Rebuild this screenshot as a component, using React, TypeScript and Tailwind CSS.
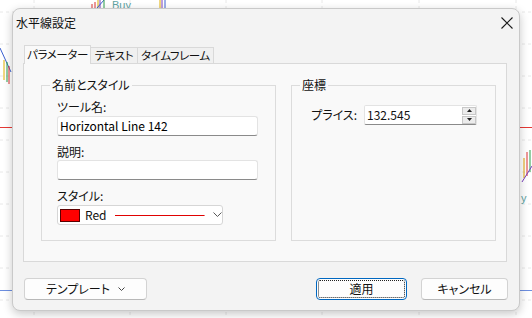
import React from 'react';

function ChartBackground() {
  const hLines = [12, 44, 76, 108, 140, 172, 204, 236, 268, 300];
  const vLines = [34, 130, 226, 322, 419, 516];
  return (
    <svg className="absolute inset-0" width="532" height="318" viewBox="0 0 532 318">
      <rect width="532" height="318" fill="#ffffff" />
      {hLines.map((y) => (
        <line key={'h' + y} x1="0" y1={y} x2="532" y2={y} stroke="#e8e8e8" strokeDasharray="3 3" />
      ))}
      {vLines.map((x) => (
        <line key={'v' + x} x1={x} y1="0" x2={x} y2="318" stroke="#e8e8e8" strokeDasharray="3 3" />
      ))}
      <line x1="0" y1="127.5" x2="532" y2="127.5" stroke="#e53935" />
      <line x1="0" y1="290.5" x2="532" y2="290.5" stroke="#6d8fe0" />
      {/* candles top */}
      <line x1="92" y1="4" x2="92" y2="8" stroke="#d33" />
      <line x1="95" y1="2" x2="95" y2="8" stroke="#d33" />
      <line x1="98" y1="0" x2="98" y2="8" stroke="#e0b000" />
      <line x1="100" y1="0" x2="100" y2="8" stroke="#7a3fbf" />
      <line x1="97" y1="8" x2="104" y2="0" stroke="#3a5fd0" />
      <line x1="104" y1="0" x2="104" y2="8" stroke="#2a9d4a" />
      <text x="112" y="9" fontSize="11" fill="#5fa3a3" fontFamily="Liberation Sans, sans-serif">Buy</text>
      <line x1="160" y1="0" x2="160" y2="8" stroke="#e0b000" />
      <line x1="162" y1="0" x2="162" y2="9" stroke="#7a3fbf" />
      <line x1="165" y1="0" x2="165" y2="8" stroke="#3a5fd0" />
      {/* left candles */}
      <line x1="0" y1="48" x2="11" y2="72" stroke="#3a5fd0" />
      <line x1="4" y1="60" x2="4" y2="80" stroke="#e0b000" />
      <line x1="7" y1="62" x2="7" y2="82" stroke="#2a9d4a" />
      <line x1="9" y1="66" x2="9" y2="84" stroke="#d33" />
      {/* right candles */}
      <line x1="524" y1="158" x2="524" y2="178" stroke="#e0a000" />
      <line x1="527" y1="152" x2="527" y2="176" stroke="#d33" />
      <line x1="530" y1="150" x2="530" y2="172" stroke="#2a9d4a" />
      <line x1="522" y1="182" x2="532" y2="166" stroke="#7a3fbf" />
      <text x="521" y="202" fontSize="11" fill="#5fa3a3" fontFamily="Liberation Sans, sans-serif">y</text>
    </svg>
  );
}

function TextInput({ value, width }: { value?: string; width: string }) {
  return (
    <div
      className={`${width} h-[20px] bg-white border border-[#e3e3e3] border-b-[#8a8a8a] rounded-[3px] flex items-center pl-[2px] text-[12px] leading-none text-black`}
    >
      {value}
    </div>
  );
}

export default function App() {
  return (
    <div className="relative w-[532px] h-[318px] overflow-hidden font-['Noto_Sans_CJK_JP',sans-serif] [font-feature-settings:'palt'] text-[#111]">
      <ChartBackground />

      <div className="absolute left-[12px] top-[8px] w-[508px] h-[303px] bg-[#f3f3f3] border border-[#c9c9c9] rounded-[8px] shadow-[0_3px_10px_rgba(0,0,0,0.22)] flex flex-col">
        {/* title bar */}
        <div className="h-[36px] flex items-start justify-between">
          <div className="pl-[3px] pt-[5px] text-[12px] leading-[17px]">水平線設定</div>
          <div className="mr-[6px] mt-[7px] w-[13px] h-[13px] flex items-center justify-center">
            <svg width="12" height="12" viewBox="0 0 12 12">
              <path d="M0.5 0.5 L11.5 11.5 M11.5 0.5 L0.5 11.5" stroke="#1a1a1a" strokeWidth="1.1" fill="none" />
            </svg>
          </div>
        </div>

        {/* tabs */}
        <div className="ml-[10px] mr-[12px]">
          <div className="relative z-10 flex items-end pl-[1px] text-[11.5px] tracking-[-0.4px] whitespace-nowrap">
            <div className="w-[67px] h-[19px] -mb-px bg-[#f9f9f9] border border-b-0 border-[#d9d9d9] flex items-center justify-center leading-none">
              パラメーター
            </div>
            <div className="w-[47px] h-[16px] bg-[#f0f0f0] border border-l-0 border-b-0 border-[#d9d9d9] flex items-center justify-center leading-none">
              テキスト
            </div>
            <div className="w-[76px] h-[16px] bg-[#f0f0f0] border border-l-0 border-b-0 border-[#d9d9d9] flex items-center justify-center leading-none">
              タイムフレーム
            </div>
          </div>

          <div className="h-[199px] bg-[#f9f9f9] border border-[#d9d9d9] flex pl-[17px] pt-[13px] gap-[15px]">
            {/* 名前とスタイル */}
            <fieldset className="w-[235px] h-[164px] border border-[#dcdcdc] px-[8px]">
              <legend className="px-[2px] text-[12px] leading-[16px]">名前とスタイル</legend>
              <div className="pl-[7px] pt-[6px] flex flex-col text-[12px]">
                <div className="leading-[15px]">ツール名:</div>
                <div className="mt-[2px]">
                  <TextInput value="Horizontal Line 142" width="w-[201px]" />
                </div>
                <div className="mt-[8px] leading-[15px]">説明:</div>
                <div className="mt-[1px]">
                  <TextInput width="w-[201px]" />
                </div>
                <div className="mt-[8px] leading-[15px]">スタイル:</div>
                <div className="mt-[2px] w-[166px] h-[20px] bg-white border border-[#d6d6d6] rounded-[3px] flex items-center pl-[2px]">
                  <div className="w-[20px] h-[13px] bg-[#ff0000] border border-[#5a0000]" />
                  <span className="ml-[5px] text-[12px] leading-none">Red</span>
                  <svg className="ml-[9px]" width="90" height="3" viewBox="0 0 90 3">
                    <line x1="0" y1="1.5" x2="90" y2="1.5" stroke="#e00000" strokeWidth="1" />
                  </svg>
                  <svg className="ml-[8px]" width="9" height="6" viewBox="0 0 9 6">
                    <path d="M0.5 0.5 L4.5 4.5 L8.5 0.5" stroke="#555" fill="none" />
                  </svg>
                </div>
              </div>
            </fieldset>

            {/* 座標 */}
            <fieldset className="w-[205px] h-[164px] border border-[#dcdcdc] px-[8px]">
              <legend className="px-[2px] text-[12px] leading-[16px]">座標</legend>
              <div className="mt-[12px] pr-[10px] flex items-center justify-end gap-[7px] text-[12px]">
                <span className="leading-none">プライス:</span>
                <div className="w-[113px] h-[20px] bg-white border border-[#e3e3e3] border-b-[#8a8a8a] rounded-[2px] flex items-center pl-[2px]">
                  <span className="flex-1 leading-none">132.545</span>
                  <div className="flex flex-col gap-[1px]">
                    <div className="w-[14px] h-[8px] bg-[#ececec] border border-[#c8c8c8] flex items-center justify-center">
                      <svg width="5" height="3" viewBox="0 0 5 3">
                        <path d="M0 3 L2.5 0 L5 3 Z" fill="#222" />
                      </svg>
                    </div>
                    <div className="w-[14px] h-[8px] bg-[#ececec] border border-[#c8c8c8] flex items-center justify-center">
                      <svg width="5" height="3" viewBox="0 0 5 3">
                        <path d="M0 0 L2.5 3 L5 0 Z" fill="#222" />
                      </svg>
                    </div>
                  </div>
                </div>
              </div>
            </fieldset>
          </div>
        </div>

        {/* buttons */}
        <div className="mt-[16px] px-[11px] flex items-center text-[12px]">
          <button className="w-[123px] h-[22px] bg-[#fdfdfd] border border-[#d3d3d3] border-b-[#b8b8b8] rounded-[4px] flex items-center justify-center gap-[8px] leading-none">
            テンプレート
            <svg width="7" height="4" viewBox="0 0 7 4">
              <path d="M0.5 0.5 L3.5 3.5 L6.5 0.5" stroke="#444" fill="none" />
            </svg>
          </button>
          <div className="flex-1" />
          <button className="relative w-[91px] h-[22px] bg-[#fdfdfd] border border-[#0067c0] rounded-[4px] flex items-center justify-center leading-none">
            適用
            <span className="absolute inset-[1px] border border-dotted border-[#222] rounded-[2px]" />
          </button>
          <button className="ml-[14px] w-[87px] h-[22px] bg-[#fdfdfd] border border-[#d3d3d3] border-b-[#b8b8b8] rounded-[4px] flex items-center justify-center leading-none">
            キャンセル
          </button>
        </div>
      </div>
    </div>
  );
}
